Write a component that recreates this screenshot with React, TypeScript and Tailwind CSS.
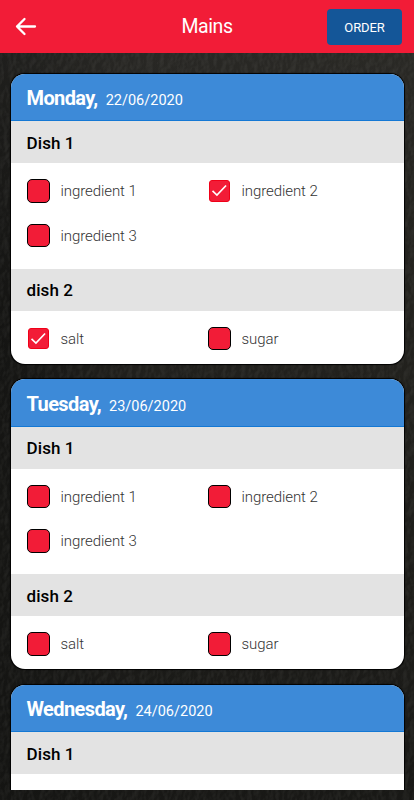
import React from 'react';

type Ingredient = { name: string; checked?: boolean };
type Dish = { title: string; ingredients: Ingredient[] };
type Day = { name: string; date: string; dishes: Dish[] };

const days: Day[] = [
    {
        name: 'Monday,',
        date: '22/06/2020',
        dishes: [
            { title: 'Dish 1', ingredients: [{ name: 'ingredient 1' }, { name: 'ingredient 2', checked: true }, { name: 'ingredient 3' }] },
            { title: 'dish 2', ingredients: [{ name: 'salt', checked: true }, { name: 'sugar' }] },
        ],
    },
    {
        name: 'Tuesday,',
        date: '23/06/2020',
        dishes: [
            { title: 'Dish 1', ingredients: [{ name: 'ingredient 1' }, { name: 'ingredient 2' }, { name: 'ingredient 3' }] },
            { title: 'dish 2', ingredients: [{ name: 'salt' }, { name: 'sugar' }] },
        ],
    },
    {
        name: 'Wednesday,',
        date: '24/06/2020',
        dishes: [{ title: 'Dish 1', ingredients: [] }],
    },
];

// dark slate wall behind the cards
function SlateBackground() {
    return (
        <svg className="absolute inset-0 h-full w-full" aria-hidden="true">
            <defs>
                <linearGradient id="shade" x1="0" y1="0" x2="1" y2="0">
                    <stop offset="0" stopColor="#121211" />
                    <stop offset="0.3" stopColor="#23221f" />
                    <stop offset="1" stopColor="#262521" />
                </linearGradient>
                <linearGradient id="fade" x1="0" y1="0" x2="0" y2="1">
                    <stop offset="0" stopColor="#32312e" stopOpacity="0.5" />
                    <stop offset="0.4" stopColor="#1a1a17" stopOpacity="0.3" />
                    <stop offset="1" stopColor="#151513" stopOpacity="0.8" />
                </linearGradient>
                <filter id="grain" x="0" y="0" width="100%" height="100%">
                    <feTurbulence type="fractalNoise" baseFrequency="0.16 0.12" numOctaves="5" seed="8" />
                    <feDiffuseLighting surfaceScale="1.6" lightingColor="#ffffff">
                        <feDistantLight azimuth="200" elevation="40" />
                    </feDiffuseLighting>
                    <feColorMatrix values="0 0 0 0 0.5  0 0 0 0 0.5  0 0 0 0 0.46  1.4 0 0 0 -0.7" />
                </filter>
            </defs>
            <rect width="100%" height="100%" fill="url(#shade)" />
            <rect width="100%" height="100%" fill="url(#fade)" />
            <rect width="100%" height="100%" filter="url(#grain)" opacity="0.13" />
        </svg>
    );
}

function Checkbox({ checked }: { checked?: boolean }) {
    if (checked) {
        return (
            <div className="m-px h-[21.5px] w-[21.5px] rounded-[3px] border border-[#f00018] bg-[#f21c37]">
                <svg viewBox="0 0 20 20" className="h-full w-full" fill="none" stroke="white" strokeWidth="1.7">
                    <path d="M2.6 10.2 7.1 14.4 16.5 4.6" />
                </svg>
            </div>
        );
    }
    return <div className="h-[23.5px] w-[23.5px] rounded-[5px] border border-black bg-[#f21c37]"></div>;
}

function DishSection({ dish }: { dish: Dish }) {
    return (
        <div>
            <h3 className="flex h-[42px] items-center bg-[#e3e3e3] pt-[3px] pl-4 text-[17px] font-medium tracking-[0.1px] text-black">{dish.title}</h3>
            <div className="grid grid-cols-[181px_1fr] gap-y-[21px] pt-4 pb-[21.5px] pl-4">
                {dish.ingredients.map((item) => (
                    <div key={item.name} className="flex h-[23.5px] items-center">
                        <div className="w-[34px]">
                            <Checkbox checked={item.checked} />
                        </div>
                        <span className="pt-px text-[15px] font-light tracking-[-0.08px] text-[#333333]">{item.name}</span>
                    </div>
                ))}
            </div>
        </div>
    );
}

function DayCard({ day }: { day: Day }) {
    return (
        <div className="h-[290px] shrink-0 overflow-hidden rounded-[14px] bg-white shadow-[0_0_1px_0.5px_#000]">
            <div className="flex h-[47.5px] items-baseline border-b border-[#1478d4] bg-[#3d8ad8] pt-[10.5px] pl-4 text-white">
                <h2 className="text-[20px] leading-7 font-bold tracking-[-0.6px]">{day.name}</h2>
                <span className="ml-2 text-[14.5px]">{day.date}</span>
            </div>
            {day.dishes.map((dish) => (
                <DishSection key={dish.title} dish={dish} />
            ))}
        </div>
    );
}

export default function App() {
    return (
        <div className="relative h-[800px] w-[414px] overflow-hidden bg-[#1c1c19] font-[Roboto,sans-serif]">
            <SlateBackground />
            <div className="relative flex h-full flex-col">
                <header className="grid h-[53px] shrink-0 grid-cols-3 items-center bg-[#f21c37] pr-3 pl-[15px] text-white">
                    <svg width="22" height="20" viewBox="0 0 22 20" fill="none" stroke="white" strokeWidth="2.3" strokeLinecap="round" strokeLinejoin="round">
                        <path d="M9.5 2 2 9.5 9.5 17M2 9.5H20" />
                    </svg>
                    <h1 className="pr-[3px] text-center text-[19.5px] tracking-[-0.4px]">Mains</h1>
                    <button className="h-[36px] w-[75px] justify-self-end rounded-[4px] bg-[#145698] pt-[3px] text-[13px] font-normal tracking-[-0.1px]">ORDER</button>
                </header>
                <main className="mx-[10.5px] mt-[20.5px] mb-[10px] flex min-h-0 flex-1 flex-col gap-[15.5px] [clip-path:inset(-2px_-2px_0_-2px)]">
                    {days.map((day) => (
                        <DayCard key={day.name} day={day} />
                    ))}
                </main>
            </div>
        </div>
    );
}
